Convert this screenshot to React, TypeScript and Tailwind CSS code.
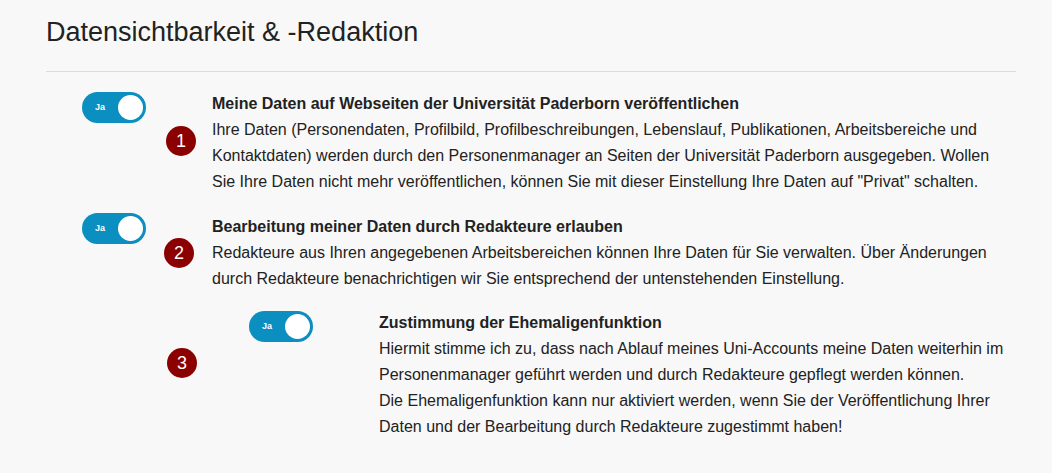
import React from "react";

function Toggle() {
  return (
    <div className="relative flex h-[31px] w-[64px] shrink-0 items-center rounded-full bg-[#0b8ec0]">
      <span className="ml-[13px] text-[9px] font-bold leading-none text-white">Ja</span>
      <span className="absolute right-[3px] top-[3px] h-[25px] w-[25px] rounded-full bg-white" />
    </div>
  );
}

function Badge({ n, className }: { n: number; className: string }) {
  return (
    <div
      className={
        "absolute flex h-[30px] w-[30px] items-center justify-center rounded-full bg-[#8b0000] text-[18px] leading-none text-white " +
        className
      }
    >
      {n}
    </div>
  );
}

export default function App() {
  return (
    <div className="min-h-screen bg-[#f8f8f8] font-['Liberation_Sans',Arial,sans-serif] text-[#222]">
      <div className="pl-[46px] pr-[36px] pt-[17px]">
        <h2 className="text-[27px] font-normal leading-[30px] text-[#222]">
          Datensichtbarkeit &amp; -Redaktion
        </h2>
        <div className="mt-[24px] border-t border-[#dcdcdc]" />

        <div className="mt-[19px] flex flex-col gap-[19px] text-[16px] leading-[26px]">
          <div className="relative flex">
            <div className="ml-[36px] mt-[1px]">
              <Toggle />
            </div>
            <div className="ml-[66px] flex-1 whitespace-nowrap">
              <div className="font-bold">Meine Daten auf Webseiten der Universität Paderborn veröffentlichen</div>
              <div>
                Ihre Daten (Personendaten, Profilbild, Profilbeschreibungen, Lebenslauf, Publikationen, Arbeitsbereiche und
                <br />
                Kontaktdaten) werden durch den Personenmanager an Seiten der Universität Paderborn ausgegeben. Wollen
                <br />
                Sie Ihre Daten nicht mehr veröffentlichen, können Sie mit dieser Einstellung Ihre Daten auf "Privat" schalten.
              </div>
            </div>
            <Badge n={1} className="left-[120px] top-[35px]" />
          </div>

          <div className="relative flex">
            <div className="ml-[36px] mt-[-1px]">
              <Toggle />
            </div>
            <div className="ml-[66px] flex-1 whitespace-nowrap">
              <div className="font-bold">Bearbeitung meiner Daten durch Redakteure erlauben</div>
              <div>
                Redakteure aus Ihren angegebenen Arbeitsbereichen können Ihre Daten für Sie verwalten. Über Änderungen
                <br />
                durch Redakteure benachrichtigen wir Sie entsprechend der untenstehenden Einstellung.
              </div>
            </div>
            <Badge n={2} className="left-[118px] top-[24px]" />
          </div>

          <div className="relative -mt-[1px] ml-[167px] flex">
            <div className="ml-[36px] mt-[1px]">
              <Toggle />
            </div>
            <div className="ml-[66px] flex-1 whitespace-nowrap">
              <div className="font-bold">Zustimmung der Ehemaligenfunktion</div>
              <div>
                Hiermit stimme ich zu, dass nach Ablauf meines Uni-Accounts meine Daten weiterhin im
                <br />
                Personenmanager geführt werden und durch Redakteure gepflegt werden können.
                <br />
                Die Ehemaligenfunktion kann nur aktiviert werden, wenn Sie der Veröffentlichung Ihrer
                <br />
                Daten und der Bearbeitung durch Redakteure zugestimmt haben!
              </div>
            </div>
            <Badge n={3} className="left-[-46px] top-[38px]" />
          </div>
        </div>
      </div>
    </div>
  );
}
